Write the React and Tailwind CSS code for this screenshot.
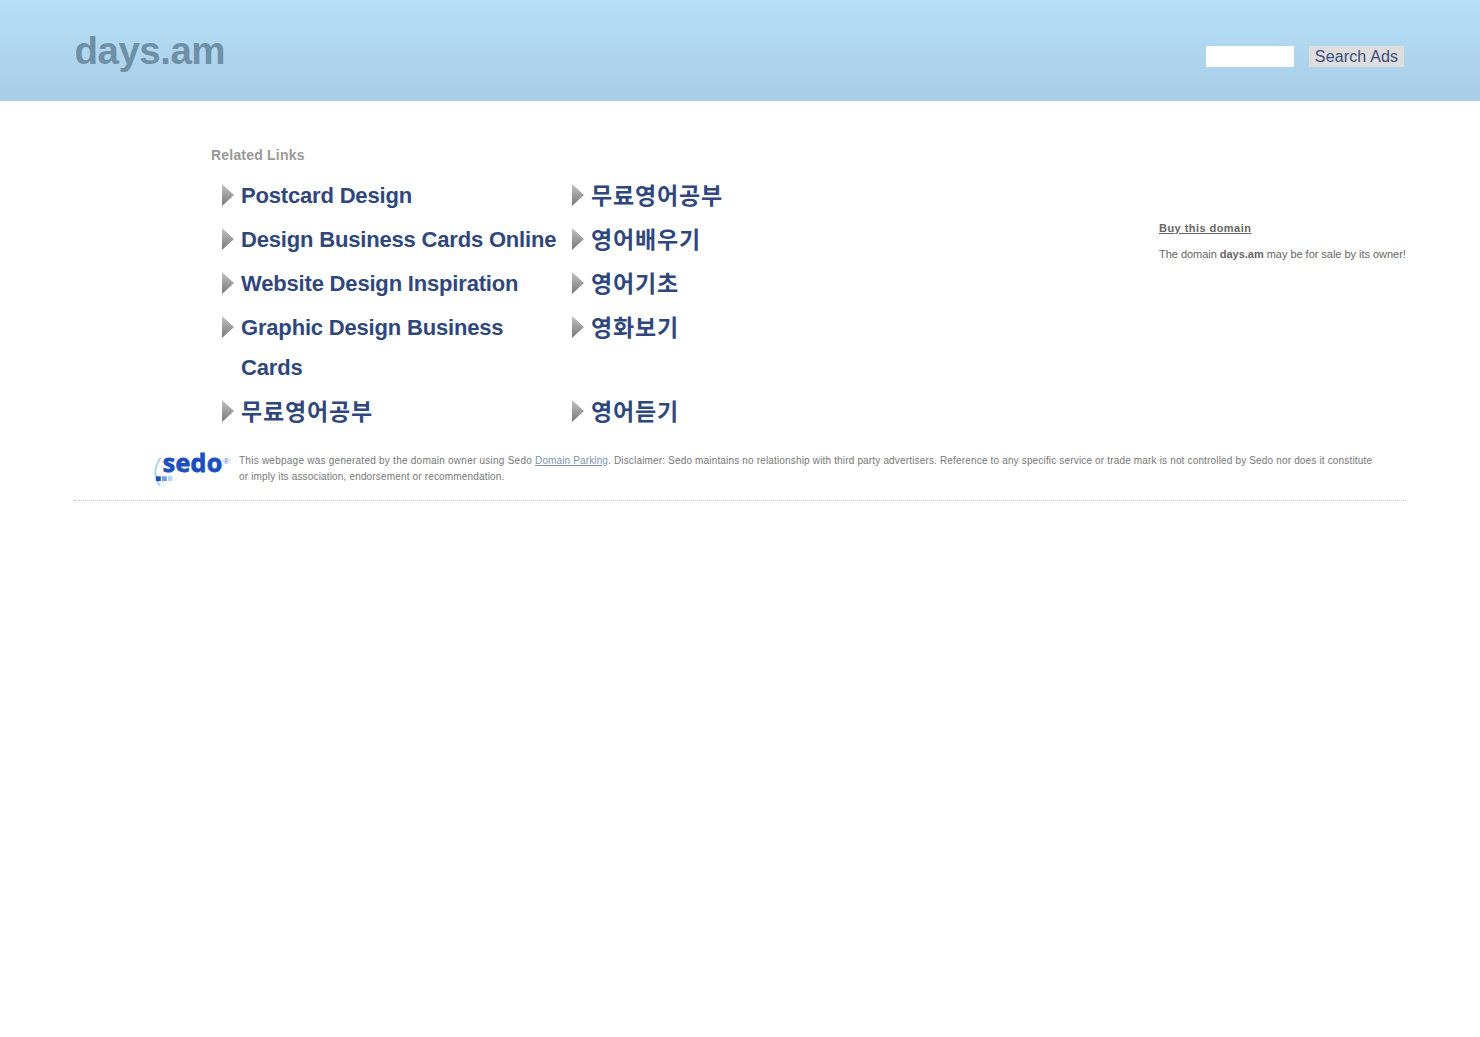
const leftLinks = [
  { label: "Postcard Design" },
  { label: "Design Business Cards Online" },
  { label: "Website Design Inspiration" },
  { label: "Graphic Design Business Cards" },
  { label: "무료영어공부", korean: true },
];

const rightLinks = [
  { label: "무료영어공부", korean: true },
  { label: "영어배우기", korean: true },
  { label: "영어기초", korean: true },
  { label: "영화보기", korean: true },
  { label: "영어듣기", korean: true },
];

function Arrow() {
  return (
    <svg className="mt-[9px] h-[22px] w-3 shrink-0" viewBox="0 0 12 22">
      <defs>
        <linearGradient id="arrow" x1="0" y1="0" x2="0" y2="1">
          <stop offset="0" stopColor="#c4c4c4" />
          <stop offset="1" stopColor="#777777" />
        </linearGradient>
      </defs>
      <path d="M0 0L12 11L0 22Z" fill="url(#arrow)" />
    </svg>
  );
}

function RelatedLink({ label, korean }) {
  return (
    <a href="#" className="flex w-[350px] items-start gap-[7px] pr-2.5 text-[#2f477d]">
      <Arrow />
      {korean ? (
        <span className="-mt-px mb-px font-['Noto_Sans_CJK_KR',sans-serif] text-[23px] leading-10 font-bold tracking-[0.84px]">
          {label}
        </span>
      ) : (
        <span className="mt-px -mb-px text-[22px] leading-10 font-bold tracking-[-0.18px]">{label}</span>
      )}
    </a>
  );
}

function Header() {
  return (
    <header className="flex h-[101px] items-start justify-between bg-linear-to-b from-[#b6e0f7] to-[#a8cde6] pr-[76px] pl-[74.5px]">
      <h1 className="mt-[28px] text-[38.5px] leading-[46px] font-bold tracking-[-0.5px] text-[#6e8fa5]">days.am</h1>
      <form className="mt-[46px] flex gap-[15px]">
        <input type="text" className="h-[21px] w-[88px] bg-white" />
        <button
          type="button"
          className="h-[21px] w-[95px] bg-[#dddddd] text-base leading-[21px] tracking-[0.15px] text-[#3a4d80]"
        >
          Search Ads
        </button>
      </form>
    </header>
  );
}

function SedoLogo() {
  return (
    <svg className="h-9 w-[78px] shrink-0 overflow-visible" viewBox="0 0 78 36">
      <path d="M7.500 7Q-2.500 21 7 35" fill="none" stroke="#a9d3ef" strokeWidth="2" />
      <rect x="3" y="25.300" width="4.800" height="4.800" fill="#1d4fc0" />
      <rect x="9" y="25.300" width="4.800" height="4.800" fill="#6ba0e0" />
      <rect x="14.800" y="25.300" width="4.500" height="4.800" fill="#b0d6f2" />
      <text
        x="9.700"
        y="21"
        textLength="59.500"
        fontFamily="Open Sans, sans-serif"
        fontWeight="700"
        fontSize="25"
        fill="#1b4fc0"
        stroke="#1b4fc0"
        strokeWidth="0.800"
      >
        sedo
      </text>
      <text x="70.200" y="13" fontFamily="Liberation Sans, sans-serif" fontSize="8" fill="#4a76d0">
        ®
      </text>
    </svg>
  );
}

export default function App() {
  return (
    <div className="min-h-screen bg-white font-['Liberation_Sans',Arial,sans-serif]">
      <Header />
      <main className="flex justify-between pr-[74px] pl-[211px]">
        <section className="pt-[45px]">
          <h2 className="text-sm leading-[18px] font-bold tracking-[0.2px] text-[#999999]">Related Links</h2>
          <div className="mt-[11px] ml-[11px] flex flex-col gap-1">
            {leftLinks.map((left, i) => (
              <div key={left.label} className="flex">
                <RelatedLink {...left} />
                <RelatedLink {...rightLinks[i]} />
              </div>
            ))}
          </div>
        </section>
        <aside className="w-[247px] pt-[119px] text-[11px] whitespace-nowrap text-[#666666]">
          <a href="#" className="block leading-4 font-bold tracking-[0.45px] underline">
            Buy this domain
          </a>
          <p className="mt-2.5 leading-4 tracking-[-0.03px]">
            The domain <b>days.am</b> may be for sale by its owner!
          </p>
        </aside>
      </main>
      <footer className="mx-[74px] mt-[20px] flex h-[50px] items-start border-b border-dotted border-[#cccccc] pl-[79px]">
        <SedoLogo />
        <p className="ml-2 w-[1136px] pt-[2px] text-[10px] leading-4 tracking-[0.165px] text-[#777777]">
          <span className="tracking-[0.245px]">This webpage was generated by the domain owner using Sedo </span>
          <a href="#" className="tracking-[0.13px] text-[#7a93ab] underline">
            Domain Parking
          </a>
          . Disclaimer: Sedo maintains no relationship with third party advertisers. Reference to any specific service
          or trade mark is not controlled by Sedo nor does it constitute or imply its association, endorsement or
          recommendation.
        </p>
      </footer>
    </div>
  );
}
